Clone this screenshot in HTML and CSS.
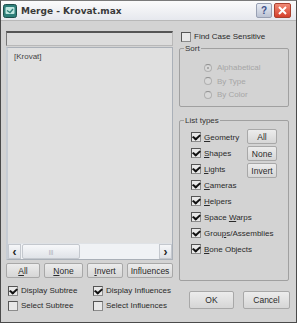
FILE: index.html
```html
<!DOCTYPE html>
<html lang="en">

<head>
    <meta charset="UTF-8">
    <meta name="viewport" content="width=device-width, initial-scale=1.0">
    <title>Merge - Krovat.max</title>
    <link rel="stylesheet" href="styles.css">
</head>

<body>

    <div class="window">

        <!-- Title bar -->
        <div class="titlebar">
            <span class="app-icon">
                <svg width="14" height="14" viewBox="0 0 14 14">
                    <rect x="0.5" y="0.5" width="13" height="13" rx="2" fill="#2e7f7a" stroke="#1d4f4c"/>
                    <rect x="2.5" y="3" width="9" height="7" rx="1" fill="#bfe6e0"/>
                    <path d="M4 6.5 L7 8.5 L10 5" stroke="#2e7f7a" stroke-width="1.4" fill="none"/>
                </svg>
            </span>
            <span class="title">Merge - Krovat.max</span>
            <span class="tb-btn help">?</span>
            <span class="tb-btn close">
                <svg width="9" height="9" viewBox="0 0 9 9">
                    <path d="M1 1 L8 8 M8 1 L1 8" stroke="#fff" stroke-width="2"/>
                </svg>
            </span>
        </div>

        <div class="content">

            <!-- Left column -->
            <div class="left">
                <div class="search"></div>
                <div class="listbox">
                    <div class="list-items">
                        <div class="item">[Krovat]</div>
                    </div>
                    <div class="hscroll">
                        <span class="arrow">&lsaquo;</span>
                        <span class="track">
                            <span class="thumb">|||</span>
                        </span>
                        <span class="arrow">&rsaquo;</span>
                    </div>
                </div>
                <div class="btn-row">
                    <button class="btn w-all"><u>A</u>ll</button>
                    <button class="btn w-none"><u>N</u>one</button>
                    <button class="btn w-invert"><u>I</u>nvert</button>
                    <button class="btn w-infl">Influences</button>
                </div>
                <div class="check-grid">
                    <label class="check"><span class="box on"></span><span>Display Subtree</span></label>
                    <label class="check"><span class="box on"></span><span>Display Influences</span></label>
                    <label class="check"><span class="box"></span><span>Select Subtree</span></label>
                    <label class="check"><span class="box"></span><span>Select Influences</span></label>
                </div>
            </div>

            <!-- Right column -->
            <div class="right">
                <label class="check find"><span class="box"></span><span>Find Case Sensitive</span></label>

                <fieldset class="group sort">
                    <legend>Sort</legend>
                    <div class="radios">
                        <div class="radio"><span class="dot on"></span><span>Alphabetical</span></div>
                        <div class="radio"><span class="dot"></span><span>By Type</span></div>
                        <div class="radio"><span class="dot"></span><span>By Color</span></div>
                    </div>
                </fieldset>

                <fieldset class="group types">
                    <legend>List types</legend>
                    <div class="types-body">
                        <div class="type-list">
                            <label class="check"><span class="box on"></span><span><u>G</u>eometry</span></label>
                            <label class="check"><span class="box on"></span><span><u>S</u>hapes</span></label>
                            <label class="check"><span class="box on"></span><span><u>L</u>ights</span></label>
                            <label class="check"><span class="box on"></span><span><u>C</u>ameras</span></label>
                            <label class="check"><span class="box on"></span><span><u>H</u>elpers</span></label>
                            <label class="check"><span class="box on"></span><span>Space <u>W</u>arps</span></label>
                            <label class="check"><span class="box on"></span><span>Grou<u>p</u>s/Assemblies</span></label>
                            <label class="check"><span class="box on"></span><span><u>B</u>one Objects</span></label>
                        </div>
                        <div class="type-btns">
                            <button class="btn small">All</button>
                            <button class="btn small">None</button>
                            <button class="btn small">Invert</button>
                        </div>
                    </div>
                </fieldset>

                <div class="ok-row">
                    <button class="btn ok">OK</button>
                    <button class="btn cancel">Cancel</button>
                </div>
            </div>

        </div>
    </div>

</body>

</html>
```

FILE: styles.css
```css
body {
    margin: 0;
    font-family: "Liberation Sans", Arial, sans-serif;
    font-size: 8px;
    color: #2a2a2a;
    background: #ffffff;
}

.window {
    width: 297px;
    height: 323px;
    box-sizing: border-box;
    border: 1px solid #4a4a4a;
    border-top-color: #7a7a7a;
    background: #d3d3d3;
    display: flex;
    flex-direction: column;
}

/* Title bar */
.titlebar {
    height: 19px;
    display: flex;
    align-items: center;
    padding: 0 5px 0 2px;
    background: linear-gradient(#fbfbfb, #e6e8ee);
    border-bottom: 1px solid #b8b8b8;
}

.app-icon {
    display: flex;
    width: 14px;
    height: 14px;
    margin-right: 4px;
}

.title {
    flex: 1;
    font-family: "DejaVu Sans", sans-serif;
    font-weight: bold;
    font-size: 9px;
    color: #3a3a3a;
}

.tb-btn {
    width: 16px;
    height: 15px;
    border-radius: 2px;
    display: flex;
    align-items: center;
    justify-content: center;
    box-sizing: border-box;
}

.help {
    margin-right: 2px;
    background: linear-gradient(#e8ecf4, #bcc3d3);
    border: 1px solid #98a0b3;
    color: #3d4f8a;
    font-weight: bold;
    font-size: 10px;
}

.close {
    width: 17px;
    background: linear-gradient(#f08a76, #d5402c);
    border: 1px solid #a9402f;
}

/* Content */
.content {
    flex: 1;
    display: flex;
    gap: 6px;
    padding: 10px 0 0 5px;
}

.left {
    width: 167px;
    display: flex;
    flex-direction: column;
}

.right {
    width: 110px;
    display: flex;
    flex-direction: column;
}

.search {
    height: 15px;
    box-sizing: border-box;
    border: 1px solid #b8b8b8;
    border-top: 2px solid #555;
    border-left-color: #777;
    background: #dcdcdc;
}

.listbox {
    height: 213px;
    margin-top: 1px;
    box-sizing: border-box;
    border: 1px solid #aab0b8;
    border-left: 2px solid #c6ccd4;
    background: #e0e0e0;
    display: flex;
    flex-direction: column;
}

.list-items {
    flex: 1;
    padding: 4px 6px;
}

.item {
    color: #444;
}

.hscroll {
    height: 15px;
    display: flex;
    background: #f0f2f5;
    border-top: 1px solid #dfe2e6;
}

.arrow {
    width: 13px;
    display: flex;
    align-items: center;
    justify-content: center;
    font-size: 12px;
    font-weight: bold;
    color: #222;
    background: linear-gradient(#f6f7f9, #dde0e5);
    border: 1px solid #c4c8ce;
    box-sizing: border-box;
}

.track {
    flex: 1;
    display: flex;
    padding: 0 1px;
}

.thumb {
    width: 58px;
    display: flex;
    align-items: center;
    justify-content: center;
    font-size: 6px;
    color: #9aa0a8;
    background: linear-gradient(#f7f8fa, #e0e3e8);
    border: 1px solid #c4c8ce;
    border-radius: 2px;
    box-sizing: border-box;
}

/* Buttons */
.btn {
    font-family: "Liberation Sans", Arial, sans-serif;
    font-size: 8.5px;
    color: #2a2a2a;
    padding: 0;
    height: 15px;
    box-sizing: border-box;
    background: linear-gradient(#ececec, #d6d6d6);
    border: 1px solid #a8a8a8;
    border-radius: 2px;
}

.btn-row {
    display: flex;
    justify-content: space-between;
    margin-top: 3px;
}

.w-all { width: 34px; }
.w-none { width: 39px; }
.w-invert { width: 36px; }
.w-infl { width: 46px; }

/* Checkboxes */
.check {
    display: flex;
    align-items: center;
    height: 15px;
    white-space: nowrap;
}

.box {
    width: 10px;
    height: 10px;
    margin-right: 3px;
    box-sizing: border-box;
    border: 1px solid #8c8c8c;
    border-top-color: #555;
    border-left-color: #555;
    background: #e8e8e8;
    flex-shrink: 0;
    position: relative;
}

.box.on::after {
    content: "";
    position: absolute;
    left: 2px;
    top: 0;
    width: 3px;
    height: 5px;
    border: solid #111;
    border-width: 0 2px 2px 0;
    transform: rotate(40deg) skewX(-8deg);
}

.check-grid {
    display: grid;
    grid-template-columns: 85px 1fr;
    margin-top: 5px;
    padding-left: 2px;
}

.find {
    margin-top: -2px;
    margin-left: 2px;
}

/* Group boxes */
.group {
    margin: 0;
    padding: 0 4px;
    border: 1px solid #a0a0a0;
    border-radius: 2px;
    min-width: 0;
    box-sizing: border-box;
}

.group legend {
    padding: 0 1px;
    color: #333;
}

.sort {
    height: 63px;
}

.radios {
    padding: 8px 0 0 20px;
}

.radio {
    display: flex;
    align-items: center;
    height: 13.5px;
    color: #a6a6a6;
}

.dot {
    width: 8px;
    height: 8px;
    margin-right: 5px;
    border-radius: 50%;
    box-sizing: border-box;
    border: 1px solid #b0b0b0;
    border-top-color: #909090;
    background: #d8d8d8;
    position: relative;
}

.dot.on::after {
    content: "";
    position: absolute;
    left: 2px;
    top: 2px;
    width: 2px;
    height: 2px;
    border-radius: 50%;
    background: #9a9a9a;
}

.types {
    margin-top: 9px;
    height: 165px;
}

.types-body {
    display: flex;
    padding: 4px 7px 0 7px;
}

.type-list {
    flex: 1;
    min-width: 0;
}

.type-list .check {
    height: 16px;
}

.type-btns {
    display: flex;
    flex-direction: column;
    gap: 2px;
    padding-top: 0;
}

.btn.small {
    width: 30px;
}

.ok-row {
    display: flex;
    justify-content: space-between;
    margin-top: 10px;
    padding-left: 10px;
    margin-right: -1px;
}

.btn.ok {
    width: 45px;
    height: 18px;
}

.btn.cancel {
    width: 47px;
    height: 18px;
}
```
